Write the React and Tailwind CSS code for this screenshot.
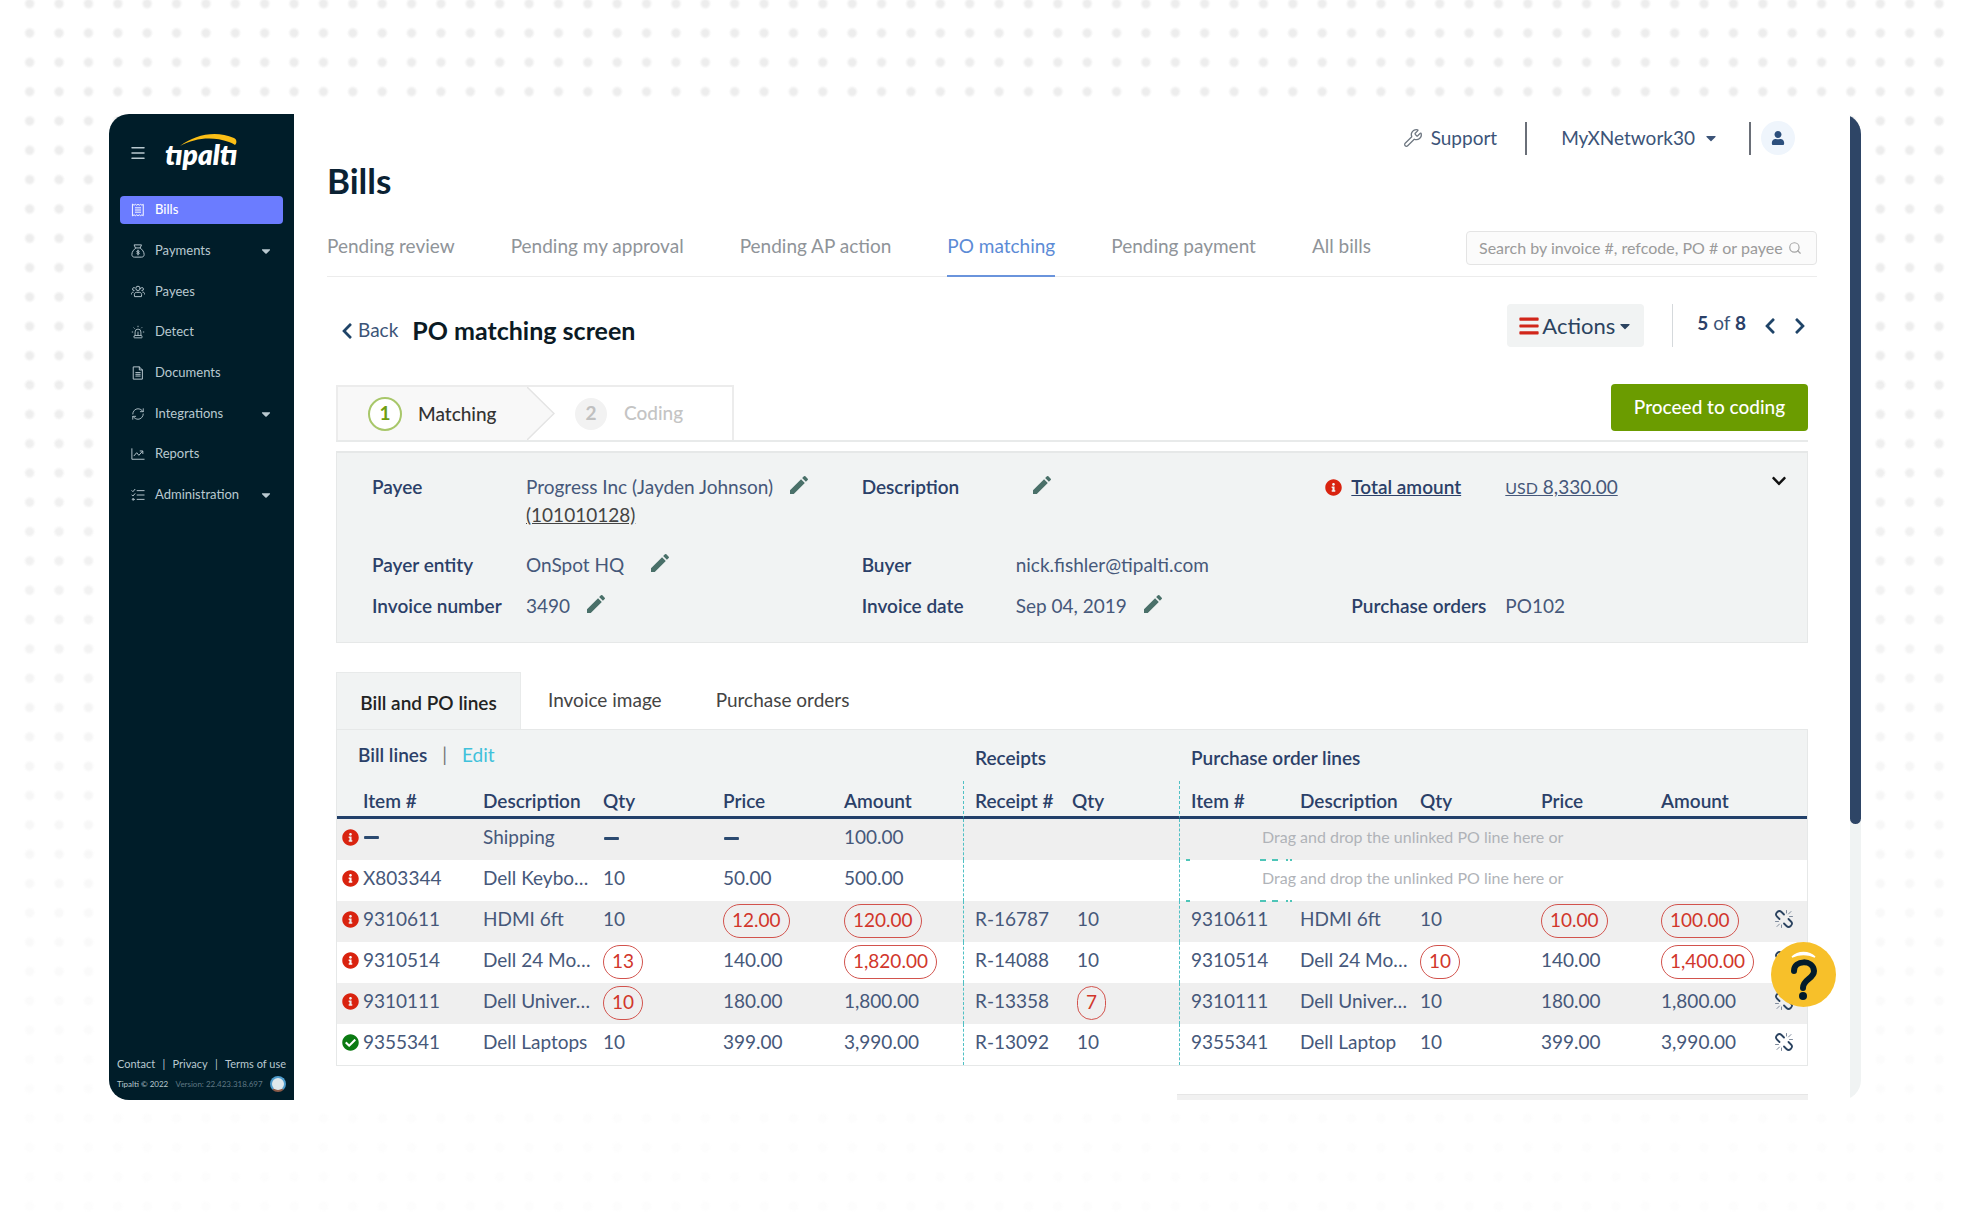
import { useState } from 'react';
import { Menu, RefreshCw, Search, Siren, Wrench } from 'lucide-react';
import {
  FaBars,
  FaCaretDown,
  FaCheckCircle,
  FaChevronDown,
  FaChevronLeft,
  FaChevronRight,
  FaInfoCircle,
  FaMinus,
  FaUser,
} from 'react-icons/fa';
import { MdEdit } from 'react-icons/md';

const BILL_TABS = [
  'Pending review',
  'Pending my approval',
  'Pending AP action',
  'PO matching',
  'Pending payment',
  'All bills',
];

const DETAIL_TABS = ['Bill and PO lines', 'Invoice image', 'Purchase orders'];

// `flag` lists the mismatching fields that get a red outline.
const LINES = [
  {
    id: 'shipping',
    bill: { item: null, description: 'Shipping', qty: null, price: null, amount: '100.00' },
  },
  {
    id: 'x803344',
    bill: { item: 'X803344', description: 'Dell Keybo…', qty: '10', price: '50.00', amount: '500.00' },
  },
  {
    id: '9310611',
    bill: { item: '9310611', description: 'HDMI 6ft', qty: '10', price: '12.00', amount: '120.00', flag: ['price', 'amount'] },
    receipt: { number: 'R-16787', qty: '10' },
    po: { item: '9310611', description: 'HDMI 6ft', qty: '10', price: '10.00', amount: '100.00', flag: ['price', 'amount'] },
  },
  {
    id: '9310514',
    bill: { item: '9310514', description: 'Dell 24 Mo…', qty: '13', price: '140.00', amount: '1,820.00', flag: ['qty', 'amount'] },
    receipt: { number: 'R-14088', qty: '10' },
    po: { item: '9310514', description: 'Dell 24 Mo…', qty: '10', price: '140.00', amount: '1,400.00', flag: ['qty', 'amount'] },
  },
  {
    id: '9310111',
    bill: { item: '9310111', description: 'Dell Univer…', qty: '10', price: '180.00', amount: '1,800.00', flag: ['qty'] },
    receipt: { number: 'R-13358', qty: '7', flag: ['qty'] },
    po: { item: '9310111', description: 'Dell Univer…', qty: '10', price: '180.00', amount: '1,800.00' },
  },
  {
    id: '9355341',
    matched: true,
    bill: { item: '9355341', description: 'Dell Laptops', qty: '10', price: '399.00', amount: '3,990.00' },
    receipt: { number: 'R-13092', qty: '10' },
    po: { item: '9355341', description: 'Dell Laptop', qty: '10', price: '399.00', amount: '3,990.00' },
  },
];

function LineIcon({ children }) {
  return (
    <svg
      viewBox="0 0 16 16"
      className="h-3.5 w-3.5"
      fill="none"
      stroke="currentColor"
      strokeWidth="1.1"
      strokeLinecap="round"
      strokeLinejoin="round"
      aria-hidden="true"
    >
      {children}
    </svg>
  );
}

const ReceiptIcon = () => (
  <LineIcon>
    <path d="M2 1.500l1.500 1 1.500-1 1.500 1 1.500-1 1.500 1 1.500-1 1.500 1 1.500-1v13l-1.500-1-1.500 1-1.500-1-1.500 1-1.500-1-1.500 1-1.500-1-1.500 1z" />
    <path d="M5 5.500h6M5 8h6M5 10.500h6" />
  </LineIcon>
);

const MoneyBagIcon = () => (
  <LineIcon>
    <path d="M5.500 4.500h5L12 1H4zM5.500 4.500C3 6.500 1 9 1 12c0 2 1.200 3 3 3h8c1.800 0 3-1 3-3 0-3-2-5.500-4.500-7.500" />
    <path d="M9.500 8.200c-.4-.5-2.900-.8-2.900.4 0 1.300 3 .7 3 2 0 1.200-2.600 1-3.100.3M8 7v5.500" />
  </LineIcon>
);

const PeopleIcon = () => (
  <LineIcon>
    <circle cx="8" cy="5" r="2.500" />
    <path d="M4 14c-.8-3 .5-4.500 2.500-4.500h3c2 0 3.300 1.500 2.500 4.500z" />
    <path d="M3.500 7.500A1.700 1.700 0 1 1 4 4.200M.5 11.500c0-1.500.6-2.200 2-2.200M12.500 7.500a1.700 1.700 0 1 0-.5-3.300M15.500 11.500c0-1.500-.6-2.200-2-2.200" />
  </LineIcon>
);

const DocumentIcon = () => (
  <LineIcon>
    <path d="M3 1h6.500L13 4.500V15H3z" />
    <path d="M9.500 1v3.500H13M5.500 7.500h5M5.500 9.500h5M5.500 11.500h5" />
  </LineIcon>
);

const ChartIcon = () => (
  <LineIcon>
    <path d="M1 2v12h14M3.500 10l3-3.500 2.500 3 4-4.500M10.500 4.500h3v3" />
  </LineIcon>
);

const TasksIcon = () => (
  <LineIcon>
    <path d="M1 3l1.200 1.200L4.500 1.500M1 8l1.200 1.200L4.500 6.500M7 3h8M7 8h8M7 13h8" />
    <circle cx="2.500" cy="13" r="1" />
  </LineIcon>
);

const NAV_ITEMS = [
  { label: 'Bills', icon: <ReceiptIcon />, active: true },
  { label: 'Payments', icon: <MoneyBagIcon />, expandable: true },
  { label: 'Payees', icon: <PeopleIcon /> },
  { label: 'Detect', icon: <Siren className="h-3.5 w-3.5" strokeWidth={1.5} aria-hidden="true" /> },
  { label: 'Documents', icon: <DocumentIcon /> },
  { label: 'Integrations', icon: <RefreshCw className="h-3.5 w-3.5" strokeWidth={1.5} aria-hidden="true" />, expandable: true },
  { label: 'Reports', icon: <ChartIcon /> },
  { label: 'Administration', icon: <TasksIcon />, expandable: true },
];

function Logo() {
  return (
    <svg viewBox="0 0 74 40" className="h-10 w-[74px]" role="img" aria-label="tipalti">
      <path d="M15 14C30 3 50-2 69 6c3 1.400 3 5 1 7-1.500-1-3-2-6-3C47 4 30 6 15 14z" fill="#fbbf16" />
      <text
        x="0"
        y="33"
        fill="#fff"
        fontFamily="Lato, sans-serif"
        fontSize="28"
        fontWeight="800"
        fontStyle="italic"
      >
        tıpaltı
      </text>
    </svg>
  );
}

function UnlinkIcon() {
  return (
    <svg viewBox="0 0 20 20" className="h-5 w-5" fill="none" stroke="#2b4360" strokeLinecap="round" aria-hidden="true">
      <path d="M5.500 10L3 7.500a3 3 0 0 1 0-4.200l.3-.3a3 3 0 0 1 4.200 0L10 5.500" strokeWidth="1.800" />
      <path d="M10 14.500l2.500 2.500a3 3 0 0 0 4.200 0l.3-.3a3 3 0 0 0 0-4.200L14.500 10" strokeWidth="1.800" />
      <path d="M12.500 4V1.500M14.500 5l2.500-2.500M15.500 7.500H18.500M4.500 12.500H1.500M5.500 15L3 17.500M7.500 16v2.500" stroke="#7f8b9c" strokeWidth="1" />
    </svg>
  );
}

function Sidebar() {
  return (
    <aside className="flex w-[185px] shrink-0 flex-col bg-[#001d29] text-[#b9c9d0]">
      <div className="flex items-center gap-[18px] pl-5 pt-[18px]">
        <button type="button" aria-label="Toggle menu" className="pt-0.5">
          <Menu className="h-[18px] w-[18px]" aria-hidden="true" />
        </button>
        <Logo />
      </div>

      <nav className="mt-6 px-[11px]">
        <ul className="flex h-[313px] flex-col justify-between text-[13px]">
          {NAV_ITEMS.map((item) => (
            <li key={item.label}>
              <a
                href="#"
                aria-current={item.active ? 'page' : undefined}
                className={`flex h-7 items-center rounded pl-[11px] pr-2.5 ${
                  item.active ? 'bg-[#6b7cff] font-medium text-white' : ''
                }`}
              >
                <span className="flex w-6">{item.icon}</span>
                <span className="flex-1">{item.label}</span>
                {item.expandable ? <FaCaretDown className="h-3.5 w-3.5" aria-hidden="true" /> : null}
              </a>
            </li>
          ))}
        </ul>
      </nav>

      <footer className="mt-auto px-2 pb-2">
        <div className="mb-[3px] flex items-center justify-between whitespace-nowrap text-[11px]">
          <a href="#">Contact</a>
          <span>|</span>
          <a href="#">Privacy</a>
          <span>|</span>
          <a href="#">Terms of use</a>
        </div>
        <div className="flex items-center justify-between whitespace-nowrap text-[8px]">
          <span>Tipalti © 2022</span>
          <span className="text-[#5f7884]">Version: 22.423.318.697</span>
          <span className="h-4 w-4 rounded-full border-2 border-[#4f9ccc] border-b-[#8a5a48] bg-[#dfe8ec]" />
        </div>
      </footer>
    </aside>
  );
}

function TopBar() {
  return (
    <header className="flex h-12 items-center justify-end pr-[22px] text-[19px] text-[#3c5478]">
      <a href="#" className="flex items-center gap-2">
        <Wrench className="h-5 w-5 text-[#6d7680]" strokeWidth={1.5} aria-hidden="true" />
        Support
      </a>
      <span className="ml-7 h-[33px] border-l-2 border-[#6a6f78]" />
      <button type="button" className="ml-[34px] flex items-center gap-2">
        MyXNetwork30
        <FaCaretDown className="h-4 w-4" aria-hidden="true" />
      </button>
      <span className="ml-[30px] h-[33px] border-l-2 border-[#6a6f78]" />
      <button
        type="button"
        aria-label="Account"
        className="ml-2.5 flex h-[34px] w-[34px] items-center justify-center rounded-full bg-[#eff5fc] text-[#2c4f7c]"
      >
        <FaUser className="h-3.5 w-3.5" aria-hidden="true" />
      </button>
    </header>
  );
}

function BillsTabs() {
  return (
    <div className="mt-[22px] flex h-[57px] items-center justify-between border-b border-[#ececec]">
      <nav className="flex gap-14 self-stretch whitespace-nowrap text-[19px] text-[#8f9499]">
        {BILL_TABS.map((tab) => {
          const isActive = tab === 'PO matching';
          return (
            <a
              key={tab}
              href="#"
              aria-current={isActive ? 'page' : undefined}
              className={`-mb-px flex items-center border-b-2 pb-0.5 ${
                isActive ? 'border-[#6a94dc] text-[#5c8bd6]' : 'border-transparent'
              }`}
            >
              {tab}
            </a>
          );
        })}
      </nav>
      <div className="flex h-[34px] w-[351px] items-center rounded border border-[#e4e4e4] bg-[#fbfbfb] pl-3 pr-3.5">
        <input
          type="text"
          aria-label="Search bills"
          placeholder="Search by invoice #, refcode, PO # or payee"
          className="min-w-0 flex-1 bg-transparent text-[16px] text-[#555] outline-none placeholder:text-[#9a9a9a]"
        />
        <Search className="h-3.5 w-3.5 shrink-0 text-[#a5a5a5]" aria-hidden="true" />
      </div>
    </div>
  );
}

function ScreenHeader() {
  return (
    <div className="mt-[27px] flex h-[43px] items-center">
      <a href="#" className="flex items-center gap-1 pl-1 pt-2.5 text-[19px] text-[#3c5478]">
        <FaChevronLeft className="h-[18px] w-3.5 text-[#1f4468]" aria-hidden="true" />
        Back
      </a>
      <h2 className="pl-3.5 pt-2.5 text-[25px] font-bold text-[#0b1a24]">PO matching screen</h2>
      <button
        type="button"
        className="ml-auto flex h-full w-[137px] items-center justify-center gap-0.5 rounded bg-[#f1f3f3] text-[22px] text-[#2b4360]"
      >
        <FaBars className="h-[22px] w-[22px] text-[#d1261a]" aria-hidden="true" />
        Actions
        <FaCaretDown className="h-4 w-4" aria-hidden="true" />
      </button>
      <span className="ml-7 h-full border-l border-[#d5d9dc]" />
      <p className="ml-6 pb-1 text-[19px] text-[#3c5478]">
        <b className="text-[#2b4068]">5</b> of <b className="text-[#2b4068]">8</b>
      </p>
      <button type="button" aria-label="Previous bill" className="ml-4 text-[#1f4468]">
        <FaChevronLeft className="h-[18px] w-4" aria-hidden="true" />
      </button>
      <button type="button" aria-label="Next bill" className="ml-3.5 text-[#1f4468]">
        <FaChevronRight className="h-[18px] w-4" aria-hidden="true" />
      </button>
    </div>
  );
}

function Steps() {
  return (
    <div className="mt-[37px] flex justify-between border-b-2 border-[#e8eaea]">
      <ol className="mt-px flex h-[55px] w-[398px] border-2 border-b-0 border-[#ececec] text-[19px]">
        <li className="flex items-center bg-[#f8f8f8] pl-[30px] font-medium text-[#333]">
          <span className="mr-4 flex h-[34px] w-[34px] items-center justify-center rounded-full border-2 border-[#a8c76a] bg-white font-bold text-[#6f9e10]">
            1
          </span>
          <span className="w-[109px] pt-0.5">Matching</span>
        </li>
        <li className="flex items-center font-medium text-[#c4c4c4]">
          <svg viewBox="0 0 28 53" className="h-[53px] w-7" aria-hidden="true">
            <path d="M0 0l27 26.500L0 53z" fill="#f8f8f8" />
            <path d="M0 0l27 26.500L0 53" fill="none" stroke="#e4e4e4" strokeWidth="1.500" />
          </svg>
          <span className="ml-5 mr-[17px] flex h-8 w-8 items-center justify-center rounded-full bg-[#f2f2f2] font-bold text-[#c0c0c0]">
            2
          </span>
          Coding
        </li>
      </ol>
      <button
        type="button"
        className="h-[47px] w-[197px] rounded bg-[#6b9c00] text-[19px] font-medium text-white"
      >
        Proceed to coding
      </button>
    </div>
  );
}

function EditButton({ label, spaced }) {
  return (
    <button
      type="button"
      aria-label={`Edit ${label}`}
      className={`h-6 text-[#4a7069] ${spaced ? 'ml-6' : 'ml-3.5'}`}
    >
      <MdEdit className="h-6 w-6" aria-hidden="true" />
    </button>
  );
}

function Field({ label, editable, spaced, alert, children }) {
  return (
    <div className="flex items-start whitespace-nowrap">
      <dt className={`relative w-[154px] shrink-0 font-semibold ${alert ? 'underline' : ''}`}>
        {alert ? (
          <FaInfoCircle className="absolute -left-[26px] top-1.5 h-[17px] w-[17px] text-[#d9230f]" aria-hidden="true" />
        ) : null}
        {label}
      </dt>
      <dd className="flex items-start text-[#46587a]">
        <span>{children}</span>
        {editable ? <EditButton label={label} spaced={spaced} /> : null}
      </dd>
    </div>
  );
}

function BillSummary() {
  return (
    <section className="relative mt-[9px] border border-t-2 border-[#e6e8e8] bg-[#f1f3f3] pb-[22px] pl-[35px] pt-5 text-[19px] leading-7 text-[#2b4068]">
      <dl className="grid grid-cols-[490fr_490fr_456fr]">
        <Field label="Payee" editable>
          Progress Inc (Jayden Johnson)
          <br />
          <a href="#" className="text-[#444] underline">
            (101010128)
          </a>
        </Field>
        <Field label="Description" editable />
        <Field label="Total amount" alert>
          <a href="#" className="underline">
            <span className="text-[16px]">USD</span> 8,330.00
          </a>
        </Field>
      </dl>
      <dl className="mt-[22px] grid grid-cols-[490fr_490fr_456fr] gap-y-[13px]">
        <Field label="Payer entity" editable spaced>
          OnSpot HQ
        </Field>
        <Field label="Buyer">nick.fishler@tipalti.com</Field>
        <div />
        <Field label="Invoice number" editable>
          3490
        </Field>
        <Field label="Invoice date" editable>
          Sep 04, 2019
        </Field>
        <Field label="Purchase orders">PO102</Field>
      </dl>
      <button type="button" aria-label="Collapse summary" className="absolute right-5 top-5 text-[#111]">
        <FaChevronDown className="h-4 w-4" aria-hidden="true" />
      </button>
    </section>
  );
}

function Value({ line, field }) {
  const value = line[field];
  if (value === null) {
    return <FaMinus className="inline h-[17px] w-[17px] text-[#2b4a70]" aria-label="None" />;
  }
  if (line.flag?.includes(field)) {
    return (
      <span className="flex h-[34px] w-fit items-center rounded-full border border-[#d2534d] px-2 text-[#d1362b]">
        {value}
      </span>
    );
  }
  return value;
}

function PoPlaceholder() {
  return (
    <td colSpan={6} className="border-l border-dashed border-[#4fc0c4] p-0 text-[16px] text-[#b0b3b8]">
      <p className="h-10 pl-[82px] leading-9">Drag and drop the unlinked PO line here or</p>
      <div className="flex h-px pl-1.5" aria-hidden="true">
        <span className="h-0.5 w-1 bg-[#4ec5b8]" />
        <span className="ml-[70px] h-0.5 w-1.5 bg-[#4ec5b8]" />
        <span className="ml-1.5 h-0.5 w-1.5 bg-[#4ec5b8]" />
        <span className="ml-2 h-0.5 w-0.5 bg-[#4ec5b8]" />
        <span className="ml-0.5 h-0.5 w-0.5 bg-[#4ec5b8]" />
      </div>
    </td>
  );
}

function LinesTable() {
  const divider = 'border-l border-dashed border-l-[#4fc0c4]';
  const head = 'border-b-3 border-b-[#22406a] [border-bottom-style:solid] p-0 pt-1.5 align-middle font-semibold';

  return (
    <table className="w-full table-fixed border-separate border-spacing-0 border border-[#e6e8e8] bg-white text-left text-[19px] text-[#46587a]">
      <colgroup>
        <col className="w-[146px]" />
        <col className="w-[120px]" />
        <col className="w-[120px]" />
        <col className="w-[121px]" />
        <col className="w-[119px]" />
        <col className="w-[109px]" />
        <col className="w-[107px]" />
        <col className="w-[121px]" />
        <col className="w-[120px]" />
        <col className="w-[121px]" />
        <col className="w-[120px]" />
        <col className="w-[109px]" />
        <col className="w-[37px]" />
      </colgroup>
      <thead className="whitespace-nowrap bg-[#f1f3f3] text-[#2b4068]">
        <tr className="h-[51px]">
          <th colSpan={5} scope="colgroup" className="p-0 pl-[21px] font-semibold">
            Bill lines
            <span className="px-[15px] font-normal text-[#777]">|</span>
            <button type="button" className="font-normal text-[#3fc1db]">
              Edit
            </button>
          </th>
          <th colSpan={2} scope="colgroup" className="p-0 pl-3 pt-1.5 font-semibold">
            Receipts
          </th>
          <th colSpan={6} scope="colgroup" className="p-0 pl-3 pt-1.5 font-semibold">
            Purchase order lines
          </th>
        </tr>
        <tr className="h-9">
          <th className={`${head} pl-[26px]`}>Item #</th>
          <th className={head}>Description</th>
          <th className={head}>Qty</th>
          <th className={head}>Price</th>
          <th className={head}>Amount</th>
          <th className={`${head} ${divider} pl-[11px]`}>Receipt #</th>
          <th className={head}>Qty</th>
          <th className={`${head} ${divider} pl-[11px]`}>Item #</th>
          <th className={head}>Description</th>
          <th className={head}>Qty</th>
          <th className={head}>Price</th>
          <th className={head}>Amount</th>
          <th className={head} aria-label="Unlink" />
        </tr>
      </thead>
      <tbody className="whitespace-nowrap">
        {LINES.map((line) => (
          <tr key={line.id} className="h-[41px] odd:bg-[#efefef] [&>td]:py-0">
            <td className="pl-[5px] pr-0">
              <span className="flex items-center gap-1 pb-1">
                {line.matched ? (
                  <FaCheckCircle className="h-[17px] w-[17px] text-[#0b7a12]" aria-label="Matched" />
                ) : (
                  <FaInfoCircle className="h-[17px] w-[17px] text-[#d9230f]" aria-label="Mismatch" />
                )}
                <Value line={line.bill} field="item" />
              </span>
            </td>
            {['description', 'qty', 'price', 'amount'].map((field) => (
              <td key={field} className="px-0">
                <div className={line.bill.flag?.includes(field) ? 'pb-px' : 'pb-1'}>
                  <Value line={line.bill} field={field} />
                </div>
              </td>
            ))}
            {line.receipt ? (
              <>
                <td className={`${divider} pl-[11px] pr-0`}>
                  <div className="pb-1">{line.receipt.number}</div>
                </td>
                <td className="pl-[5px] pr-0">
                  <div className={line.receipt.flag ? 'pb-px' : 'pb-1'}>
                    <Value line={line.receipt} field="qty" />
                  </div>
                </td>
              </>
            ) : (
              <>
                <td className={divider} />
                <td />
              </>
            )}
            {line.po ? (
              <>
                <td className={`${divider} pl-[11px] pr-0`}>
                  <div className="pb-1">{line.po.item}</div>
                </td>
                {['description', 'qty', 'price', 'amount'].map((field) => (
                  <td key={field} className="px-0">
                    <div className={line.po.flag?.includes(field) ? 'pb-px' : 'pb-1'}>
                      <Value line={line.po} field={field} />
                    </div>
                  </td>
                ))}
                <td className="pl-1 pr-0">
                  <button type="button" aria-label={`Unlink ${line.po.item}`} className="block pb-1">
                    <UnlinkIcon />
                  </button>
                </td>
              </>
            ) : (
              <PoPlaceholder />
            )}
          </tr>
        ))}
      </tbody>
    </table>
  );
}

function BillLines() {
  const [active, setActive] = useState(DETAIL_TABS[0]);

  return (
    <section className="mt-[29px]">
      <div role="tablist" className="flex h-[57px] text-[19px] text-[#444]">
        {DETAIL_TABS.map((tab) => (
          <button
            key={tab}
            type="button"
            role="tab"
            aria-selected={tab === active}
            onClick={() => setActive(tab)}
            className={
              tab === active
                ? 'w-[185px] border border-b-0 border-[#e8eaea] bg-[#f1f3f3] pt-1 font-semibold text-[#222]'
                : 'px-[27px]'
            }
          >
            {tab}
          </button>
        ))}
      </div>
      <LinesTable />
    </section>
  );
}

function HelpButton() {
  return (
    <button type="button" aria-label="Help" className="absolute bottom-[93px] right-[25px] h-[65px] w-[65px]">
      <svg viewBox="0 0 65 65" fill="none" strokeLinecap="round" aria-hidden="true">
        <circle cx="32.500" cy="32.500" r="32.500" fill="#f7c02a" />
        <path d="M21 15c6-6 17-6 23 0-7-3-16-3-23 0z" fill="#fff" stroke="#fff" strokeWidth="1.500" />
        <path d="M23 29c0-11 19-12 20 0 0 8-11 8-11 17" stroke="#021c2b" strokeWidth="6" />
        <circle cx="32" cy="54" r="4" fill="#021c2b" />
      </svg>
    </button>
  );
}

export default function App() {
  return (
    <div className="relative isolate min-h-screen overflow-hidden bg-white pb-[113px] pl-[109px] pr-[108px] pt-[114px] font-['Lato',sans-serif]">
      {/* dotted backdrop, fading out towards the bottom */}
      <div className="absolute -bottom-2 -top-[11px] left-[15px] right-[15px] -z-10 bg-[radial-gradient(circle,#ededed_3px,transparent_6px)] bg-[length:calc(100%/66)_calc(100%/42)] [mask-image:linear-gradient(#000_30%,#0002_90%)]" />

      <div className="relative flex overflow-hidden rounded-[20px] bg-white">
        <Sidebar />

        <div className="min-w-0 flex-1 px-[33px]">
          <TopBar />
          <h1 className="text-[35px] font-bold leading-9 text-[#0b2233]">Bills</h1>
          <BillsTabs />
          <main className="px-[9px]">
            <ScreenHeader />
            <Steps />
            <BillSummary />
            <BillLines />
            <div className="mt-7 flex justify-end">
              <div className="h-1.5 w-3/7 border-t border-[#e6e6e6] bg-[#f1f1f1]" />
            </div>
          </main>
        </div>

        <div className="w-[11px] shrink-0 bg-[#f0f3f3]">
          <div className="h-[72%] rounded-b-md bg-[#2e4566]" />
        </div>

        <HelpButton />
      </div>
    </div>
  );
}
